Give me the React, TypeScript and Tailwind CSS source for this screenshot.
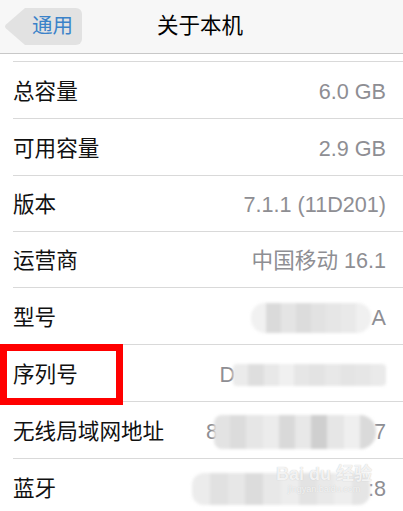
const font = { fontFamily: '"Liberation Sans", "Noto Sans CJK SC", sans-serif' };

// mosaic strips used to mask private values
function Mosaic({ cells, className }: { cells: string[]; className: string }) {
  return (
    <div className={`flex overflow-hidden blur-[1.5px] ${className}`}>
      {cells.map((c, i) => (
        <div key={i} className="h-full flex-1" style={{ background: c }} />
      ))}
    </div>
  );
}

function Row({ label, h, children }: { label: string; h: string; children: React.ReactNode }) {
  return (
    <div className={`flex items-center justify-between border-b border-[#d9d9d9] pr-[17px] pt-[4px] ${h}`}>
      <span className="text-[21.6px] text-[#111]">{label}</span>
      <div className="relative flex items-center text-[21.6px] text-[#8e8e93]">{children}</div>
    </div>
  );
}

export default function App() {
  return (
    <div className="relative h-[511px] w-[403px] overflow-hidden bg-white" style={font}>
      {/* nav bar */}
      <div className="relative flex h-[54px] items-center border-b border-[#c8c8c8] bg-[#f7f7f7]">
        <div className="ml-[4px] flex h-[37px] items-center">
          <svg width="21" height="37" viewBox="0 0 21 37" className="block">
            <path d="M21 0 L21 37 L2 20.5 Q0 18.5 2 16.5 Z" fill="#e2e2e2" />
          </svg>
          <div className="flex h-[37px] items-center rounded-r-[6px] bg-[#e2e2e2] pl-[7px] pr-[9px] text-[20.5px] text-[#3b82c9]">
            通用
          </div>
        </div>
        <div className="absolute left-0 right-0 top-0 flex h-[53px] items-center justify-center pr-[3px] text-[21.5px] text-black">
          关于本机
        </div>
      </div>

      <div className="h-[7px]" />

      <div className="ml-[13px] border-t border-[#d9d9d9]">
        <Row label="总容量" h="h-[57px]">6.0 GB</Row>
        <Row label="可用容量" h="h-[57px]">2.9 GB</Row>
        <Row label="版本" h="h-[56px]">7.1.1 (11D201)</Row>
        <Row label="运营商" h="h-[56px]">中国移动 16.1</Row>
        <Row label="型号" h="h-[57px]">
          <Mosaic
            className="mr-[1px] h-[30px] w-[120px] rounded-[14px]"
            cells={["#f1f1f1", "#dadada", "#e4e4e4", "#dcdcdc", "#e2e2e2", "#e6e6e6", "#e9e9e9", "#f0f0f0"]}
          />
          <span>A</span>
        </Row>
        <Row label="序列号" h="h-[57px]">
          <span className="mr-[-2px]">D</span>
          <Mosaic
            className="h-[22px] w-[153px] rounded-[4px]"
            cells={["#ebebeb", "#dedede", "#e8e8e8", "#f0f0f0", "#e6e6e6", "#e3e3e3", "#e8e8e8", "#e4e4e4", "#e6e6e6", "#eaeaea"]}
          />
        </Row>
        <Row label="无线局域网地址" h="h-[57px]">
          <span className="mr-[-4px]">8</span>
          <Mosaic
            className="h-[34px] w-[162px] rounded-l-[8px] rounded-r-[16px]"
            cells={["#e3e3e3", "#dcdcdc", "#e6e6e6", "#ececec", "#d9d9d9", "#e8e8e8", "#cfcfcf", "#e6e6e6", "#efefef", "#dadada"]}
          />
          <span className="ml-[-2px]">7</span>
        </Row>
        <Row label="蓝牙" h="h-[57px]">
          <Mosaic
            className="mr-[-2px] h-[32px] w-[178px] rounded-[12px]"
            cells={["#ececec", "#e1e1e1", "#e7e7e7", "#dcdcdc", "#e8e8e8", "#ededed", "#e3e3e3", "#e9e9e9", "#eeeeee", "#e5e5e5"]}
          />
          <span>:8</span>
          {/* watermark */}
          <div className="absolute left-[84px] top-[-8px] flex flex-col items-center leading-none text-white/80 [text-shadow:0_0_1px_#bdbdbd]">
            <span className="text-[18px] font-bold">Bai du 经验</span>
            <span className="mt-[2px] text-[9px]">jingyan.baidu.com</span>
          </div>
        </Row>
      </div>

      {/* highlight box */}
      <div className="absolute left-0 top-[344px] h-[61px] w-[123px] border-[7px] border-[#ff0000]" />
    </div>
  );
}
